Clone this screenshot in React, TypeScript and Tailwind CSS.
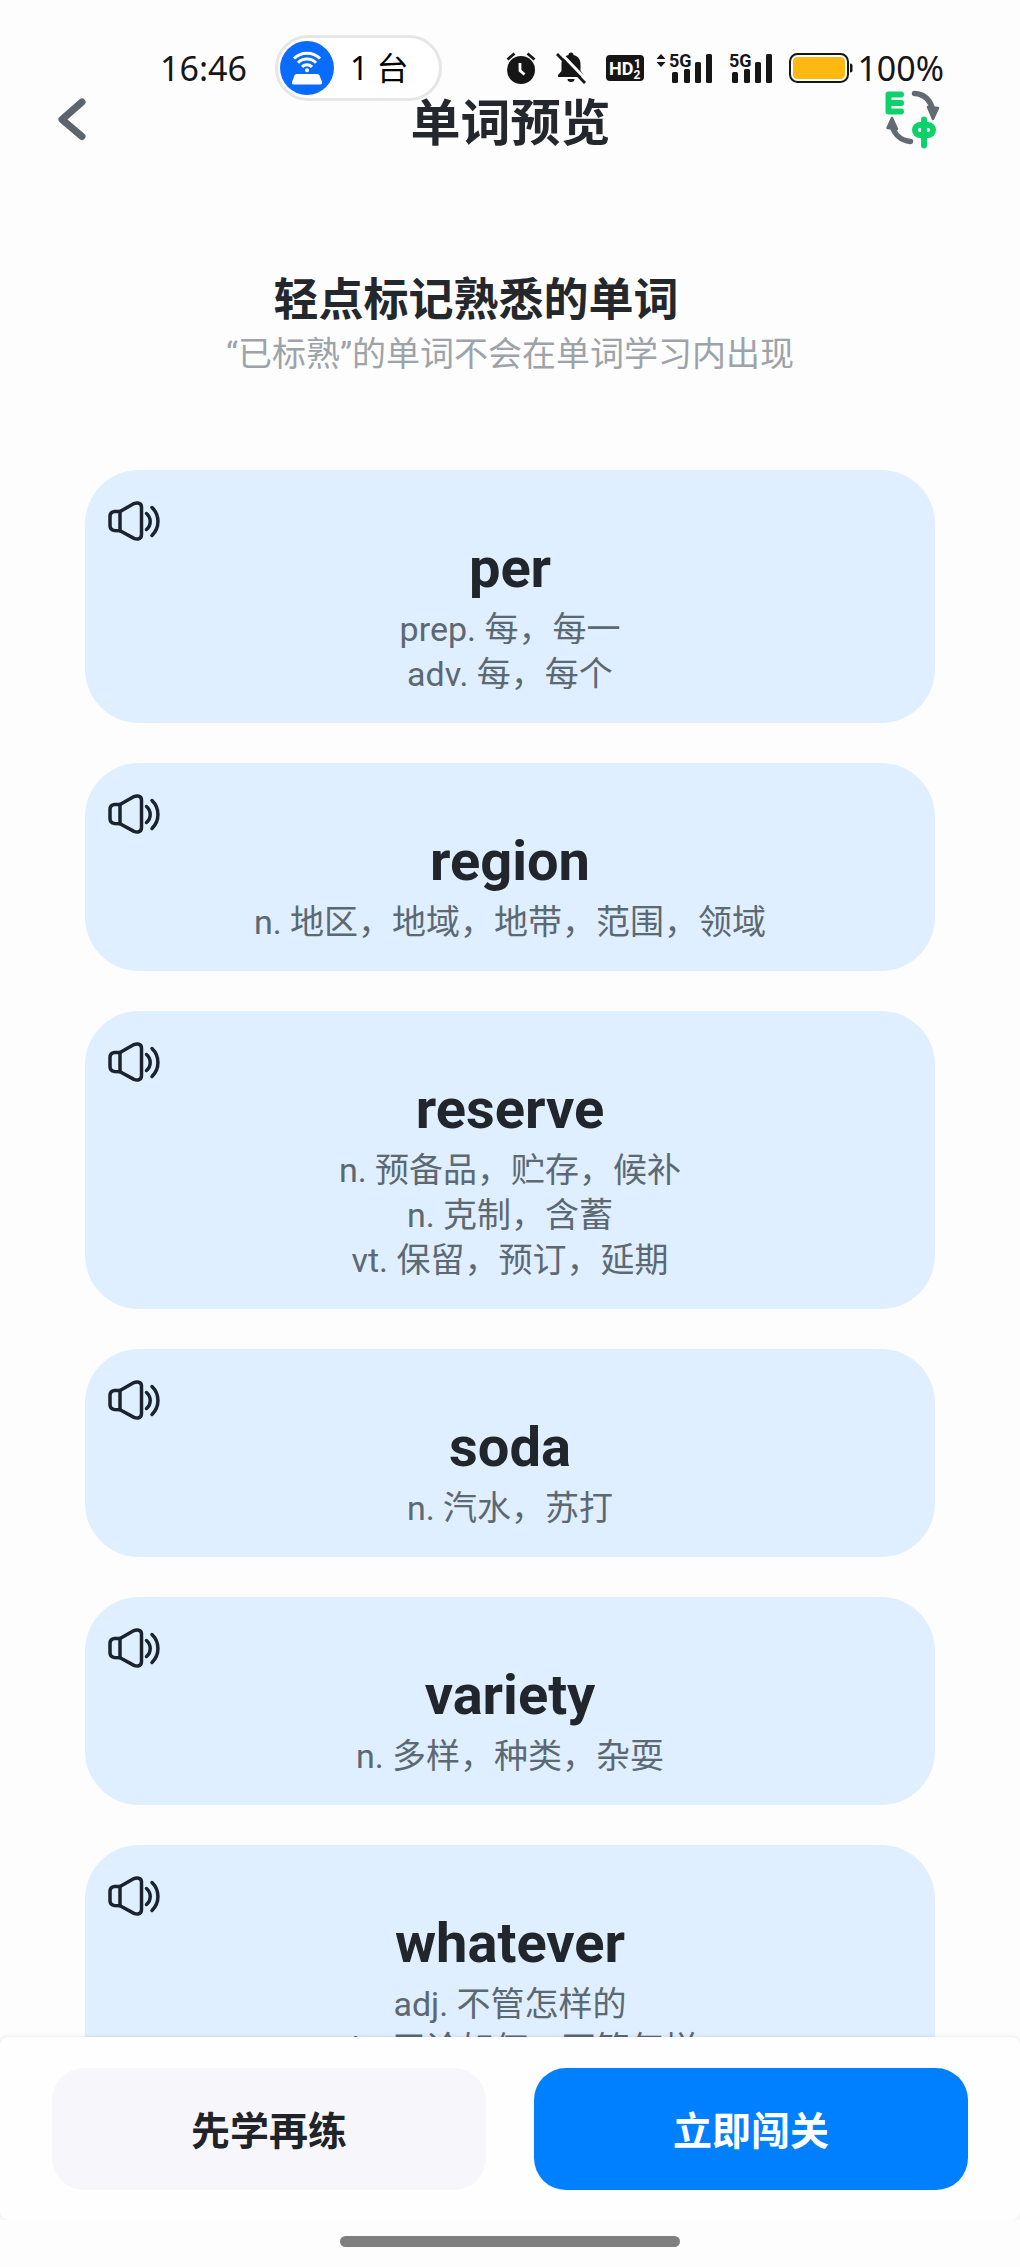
import { useState } from "react";

type Word = {
  text: string;
  meanings: string[];
};

const WORDS: Word[] = [
  { text: "per", meanings: ["prep. 每，每一", "adv. 每，每个"] },
  { text: "region", meanings: ["n. 地区，地域，地带，范围，领域"] },
  { text: "reserve", meanings: ["n. 预备品，贮存，候补", "n. 克制，含蓄", "vt. 保留，预订，延期"] },
  { text: "soda", meanings: ["n. 汽水，苏打"] },
  { text: "variety", meanings: ["n. 多样，种类，杂耍"] },
  { text: "whatever", meanings: ["adj. 不管怎样的", "adv. 无论如何，不管怎样"] },
];

function RouterIcon() {
  return (
    <svg width="54" height="54" viewBox="0 0 54 54" aria-hidden>
      <circle cx="27" cy="27" r="27" fill="#0a6cff" />
      <g fill="none" stroke="#fff" strokeWidth="3">
        <path d="M14 17.5a18.5 18.5 0 0 1 26 0" />
        <path d="M18 21.8a12.8 12.8 0 0 1 18 0" />
        <path d="M22 25.8a7.2 7.2 0 0 1 10 0" />
      </g>
      <circle cx="27" cy="29.3" r="2" fill="#fff" />
      <path d="M16.500 33h21q1.500 0 2 1.500l2.500 6.500q.5 2.500-2 2.500H14q-2.500 0-2-2.500l2.500-6.500q.5-1.500 2-1.500z" fill="#fff" />
    </svg>
  );
}

function AlarmIcon() {
  return (
    <svg width="30" height="32" viewBox="0 0 30 32" aria-hidden>
      <circle cx="15" cy="18" r="14" fill="#161616" />
      <path d="M1.500 7.500l7-6M28.500 7.500l-7-6" stroke="#161616" strokeWidth="2.800" />
      <path d="M14 11v7.500l4.500 4" fill="none" stroke="#fff" strokeWidth="2.800" />
    </svg>
  );
}

function BellOffIcon() {
  return (
    <svg width="30" height="32" viewBox="0 0 30 32" aria-hidden>
      <path
        d="M12.500 3a2.500 2.500 0 0 1 5 0c4.500 1 7 4.500 7 9v6.500l3.500 5V25H2v-2l3.500-4v-7c0-4.500 2.500-8 7-9z"
        fill="#161616"
      />
      <path d="M11.500 27h7a3.500 3 0 0 1-7 0z" fill="#161616" />
      <path d="M3.500 0L31 28.500" stroke="#fff" strokeWidth="3" />
      <path d="M1 2l28 29" stroke="#161616" strokeWidth="2.800" />
    </svg>
  );
}

function HdIcon() {
  return (
    <svg width="38" height="28" viewBox="0 0 38 28" aria-hidden>
      <rect y="1" width="38" height="26" rx="4" fill="#161616" />
      <g fill="#fff" fontFamily="Roboto, sans-serif" fontWeight="700">
        <text x="3" y="20.500" fontSize="18">
          HD
        </text>
        <text x="28" y="13.500" fontSize="12">
          1
        </text>
        <text x="27.500" y="24.500" fontSize="12">
          2
        </text>
      </g>
    </svg>
  );
}

function SignalIcon({ arrows = false }: { arrows?: boolean }) {
  const left = arrows ? 13 : 0;
  return (
    <svg width={left + 44} height="44" viewBox={`${-left} -6 ${left + 44} 44`} aria-hidden>
      {arrows && <path d="M-12.500 7l4.500-5 4.500 5zM-12.500 10l4.500 5 4.500-5z" fill="#161616" />}
      <text x="0" y="14.500" fontSize="18" fontFamily="Roboto, sans-serif" fontWeight="700" fill="#161616">
        5G
      </text>
      <g fill="#161616">
        <rect x="3" y="20" width="6" height="11" rx="1.500" />
        <rect x="15" y="17" width="6" height="14" rx="1.500" />
        <rect x="26" y="10" width="6" height="21" rx="1.500" />
        <rect x="37" y="2" width="6" height="29" rx="1.500" />
      </g>
    </svg>
  );
}

function BatteryIcon() {
  return (
    <svg width="64" height="30" viewBox="0 0 64 30" aria-hidden>
      <rect x="1" y="1" width="58" height="28" rx="7.500" fill="none" stroke="#161616" strokeWidth="2" />
      <rect x="4" y="4" width="52" height="22" rx="4.500" fill="#fdb811" />
      <path d="M61 10.500c2 0 2.500 1 2.500 2v5c0 1-.5 2-2.500 2z" fill="#161616" />
    </svg>
  );
}

function BackIcon() {
  return (
    <svg width="30" height="52" viewBox="0 0 30 52" aria-hidden>
      <path
        d="M25 6L5 23.500l20 17"
        fill="none"
        stroke="#5d646b"
        strokeWidth="7"
        strokeLinecap="round"
        strokeLinejoin="round"
      />
    </svg>
  );
}

// 中英切换
function SwapLanguageIcon() {
  return (
    <svg width="56" height="64" viewBox="0 0 56 64" aria-hidden>
      <g fill="none" stroke="#0dd26b" strokeLinejoin="round">
        <path d="M17 4.500H4.500v17H17M4.500 13H17" strokeWidth="6" strokeLinecap="round" />
        <rect x="31" y="35" width="18" height="10" rx="5" strokeWidth="6" />
        <path d="M40 29.500v26" strokeWidth="6" strokeLinecap="round" />
      </g>
      <g fill="none" stroke="#646a72" strokeWidth="5.500" strokeLinecap="round">
        <path d="M30.500 3.500c10 .5 16 7 18.500 17" />
        <path d="M26.500 51.500C16.500 50.500 10 44 8 35" />
      </g>
      <path
        d="M44 17l10 1-5 11zM8 28l5 11-9.500-1z"
        fill="#646a72"
        stroke="#646a72"
        strokeWidth="2.500"
        strokeLinejoin="round"
      />
    </svg>
  );
}

function SpeakerIcon() {
  return (
    <svg width="52" height="40" viewBox="0 0 52 40" aria-hidden>
      <g fill="none" stroke="#1b242e" strokeWidth="3.500" strokeLinecap="round" strokeLinejoin="round">
        <path d="M12 10.500L26 2.600Q28 1.700 30 2Q33.500 2.600 33.500 6V33.500Q33.500 37.400 30 38Q28 38.200 26 37.400L12 29.800" />
        <path d="M12 10.500H6.500Q2 11 2 15.500V24.500Q2 29 6.500 29.600L12 29.800Z" />
        <path d="M38.500 12.500a10.500 10.500 0 0 1 0 16" />
        <path d="M44 6.500a19.500 19.500 0 0 1 0 28" />
      </g>
    </svg>
  );
}

function StatusBar() {
  return (
    <div className="flex h-24 shrink-0 items-center pt-10 pr-[76px] pl-[160px] font-['Noto_Sans','Noto_Sans_CJK_SC',sans-serif] text-[34px] leading-10 text-[#161616]">
      <span>16:46</span>
      <div className="ml-7 flex h-[66px] shrink-0 items-center gap-4 rounded-full border-3 border-[#e6e6e6] bg-white pr-[30px] pl-0.5 text-[32px] text-black">
        <RouterIcon />
        <span className="whitespace-nowrap">1 台</span>
      </div>
      <div className="ml-auto flex items-center">
        <div className="flex items-center gap-5">
          <AlarmIcon />
          <BellOffIcon />
          <HdIcon />
        </div>
        <div className="ml-3 flex items-center gap-4">
          <SignalIcon arrows />
          <SignalIcon />
          <BatteryIcon />
        </div>
        <span className="ml-1">100%</span>
      </div>
    </div>
  );
}

function WordCard({ word, known, onToggle }: { word: Word; known: boolean; onToggle: () => void }) {
  return (
    <li
      onClick={onToggle}
      className={`relative rounded-[54px] bg-[#dfefff] pt-[62px] pb-[26px] text-center ${known ? "opacity-50" : ""}`}
    >
      <button
        type="button"
        aria-label={`播放 ${word.text}`}
        onClick={(e) => e.stopPropagation()}
        className="absolute top-[31px] left-[23px]"
      >
        <SpeakerIcon />
      </button>
      <h3 className="mb-[3px] text-[56px] leading-[72px] font-bold text-[#20262b]">{word.text}</h3>
      {word.meanings.map((m) => (
        <p key={m} className="text-[34px] leading-[45px] text-[#5c6872]">
          {m}
        </p>
      ))}
    </li>
  );
}

export default function App() {
  const [known, setKnown] = useState<string[]>([]);

  function toggle(text: string) {
    setKnown((list) => (list.includes(text) ? list.filter((t) => t !== text) : [...list, text]));
  }

  return (
    <div className="flex h-screen flex-col overflow-hidden bg-[#fdfdfd] font-[Roboto,'Noto_Sans_CJK_SC',sans-serif]">
      <StatusBar />

      <header className="relative flex h-[52px] shrink-0 items-center pr-20 pl-[57px]">
        <div className="flex flex-1">
          <button type="button" aria-label="返回">
            <BackIcon />
          </button>
        </div>
        <h1 className="pt-1 pl-6 text-[50px] leading-[52px] font-bold text-[#24282c]">单词预览</h1>
        <div className="flex flex-1 justify-end">
          <button type="button" aria-label="中英切换">
            <SwapLanguageIcon />
          </button>
        </div>
      </header>

      <main className="min-h-0 flex-1 overflow-hidden px-[85px] pt-[126px]">
        <div className="text-center">
          <h2 className="pr-[68px] text-[45px] leading-[54px] font-bold text-[#24282c]">轻点标记熟悉的单词</h2>
          <p className="text-[34px] leading-[52px] text-[#9da3a8]">“已标熟”的单词不会在单词学习内出现</p>
        </div>
        <ul className="mt-[90px] flex flex-col gap-10">
          {WORDS.map((word) => (
            <WordCard
              key={word.text}
              word={word}
              known={known.includes(word.text)}
              onToggle={() => toggle(word.text)}
            />
          ))}
        </ul>
      </main>

      <footer className="relative shrink-0">
        <div className="flex gap-12 rounded-lg bg-[#fefefe] px-[52px] pt-[31px] pb-[30px] shadow-[0_0_4px_rgba(0,0,0,0.12)]">
          <button
            type="button"
            className="h-[122px] flex-1 rounded-[32px] bg-[#f7f7fb] pt-1.5 text-[39px] font-bold text-[#202327]"
          >
            先学再练
          </button>
          <button
            type="button"
            className="h-[122px] flex-1 rounded-[32px] bg-[#007fff] pt-1.5 text-[39px] font-bold text-white"
          >
            立即闯关
          </button>
        </div>
        <div className="relative flex justify-center bg-[#fdfdfd] pt-4 pb-5">
          <div className="h-[11px] w-1/3 rounded-full bg-[#7f7f7f]" />
        </div>
      </footer>
    </div>
  );
}
